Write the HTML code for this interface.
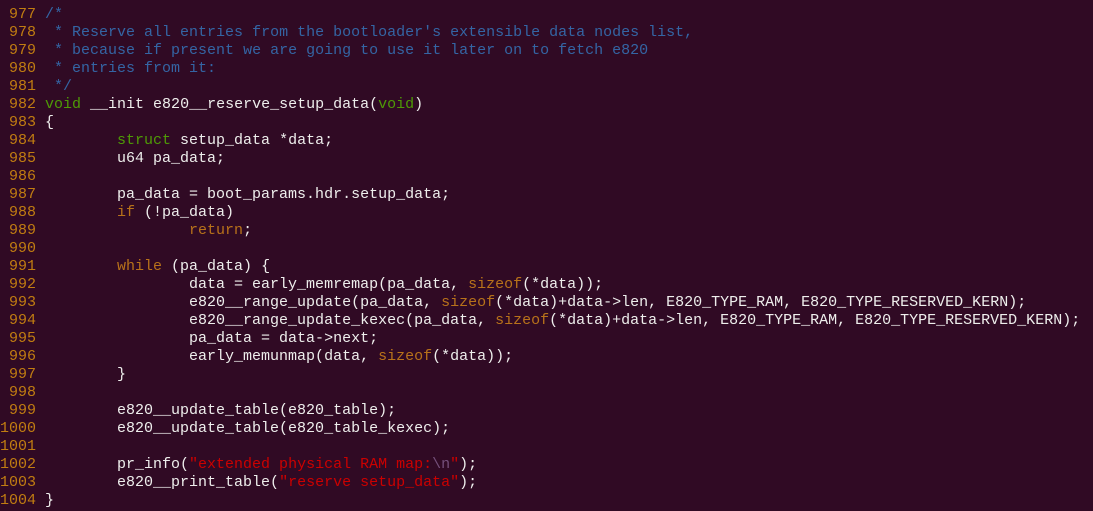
<!DOCTYPE html>
<html><head><style>
html,body{margin:0;padding:0;background:#300a24;width:1093px;height:511px;overflow:hidden}
pre{margin:0;position:absolute;left:0;top:-12px;font-family:"Liberation Mono","DejaVu Sans Mono",monospace;font-size:15px;line-height:18px;color:#eeeeec;white-space:pre}
.n{color:#c17d11}.c{color:#3465a4}.t{color:#4e9a06}.k{color:#b8721a}.s{color:#cc0000}.e{color:#75507b}
</style></head><body><pre><span class="n"> 976</span>
<span class="n"> 977</span> <span class="c">/*</span>
<span class="n"> 978</span> <span class="c"> * Reserve all entries from the bootloader's extensible data nodes list,</span>
<span class="n"> 979</span> <span class="c"> * because if present we are going to use it later on to fetch e820</span>
<span class="n"> 980</span> <span class="c"> * entries from it:</span>
<span class="n"> 981</span> <span class="c"> */</span>
<span class="n"> 982</span> <span class="t">void</span> __init e820__reserve_setup_data(<span class="t">void</span>)
<span class="n"> 983</span> {
<span class="n"> 984</span>         <span class="t">struct</span> setup_data *data;
<span class="n"> 985</span>         u64 pa_data;
<span class="n"> 986</span>
<span class="n"> 987</span>         pa_data = boot_params.hdr.setup_data;
<span class="n"> 988</span>         <span class="k">if</span> (!pa_data)
<span class="n"> 989</span>                 <span class="k">return</span>;
<span class="n"> 990</span>
<span class="n"> 991</span>         <span class="k">while</span> (pa_data) {
<span class="n"> 992</span>                 data = early_memremap(pa_data, <span class="k">sizeof</span>(*data));
<span class="n"> 993</span>                 e820__range_update(pa_data, <span class="k">sizeof</span>(*data)+data-&gt;len, E820_TYPE_RAM, E820_TYPE_RESERVED_KERN);
<span class="n"> 994</span>                 e820__range_update_kexec(pa_data, <span class="k">sizeof</span>(*data)+data-&gt;len, E820_TYPE_RAM, E820_TYPE_RESERVED_KERN);
<span class="n"> 995</span>                 pa_data = data-&gt;next;
<span class="n"> 996</span>                 early_memunmap(data, <span class="k">sizeof</span>(*data));
<span class="n"> 997</span>         }
<span class="n"> 998</span>
<span class="n"> 999</span>         e820__update_table(e820_table);
<span class="n">1000</span>         e820__update_table(e820_table_kexec);
<span class="n">1001</span>
<span class="n">1002</span>         pr_info(<span class="s">"extended physical RAM map:</span><span class="e">\n</span><span class="s">"</span>);
<span class="n">1003</span>         e820__print_table(<span class="s">"reserve setup_data"</span>);
<span class="n">1004</span> }
</pre></body></html>
